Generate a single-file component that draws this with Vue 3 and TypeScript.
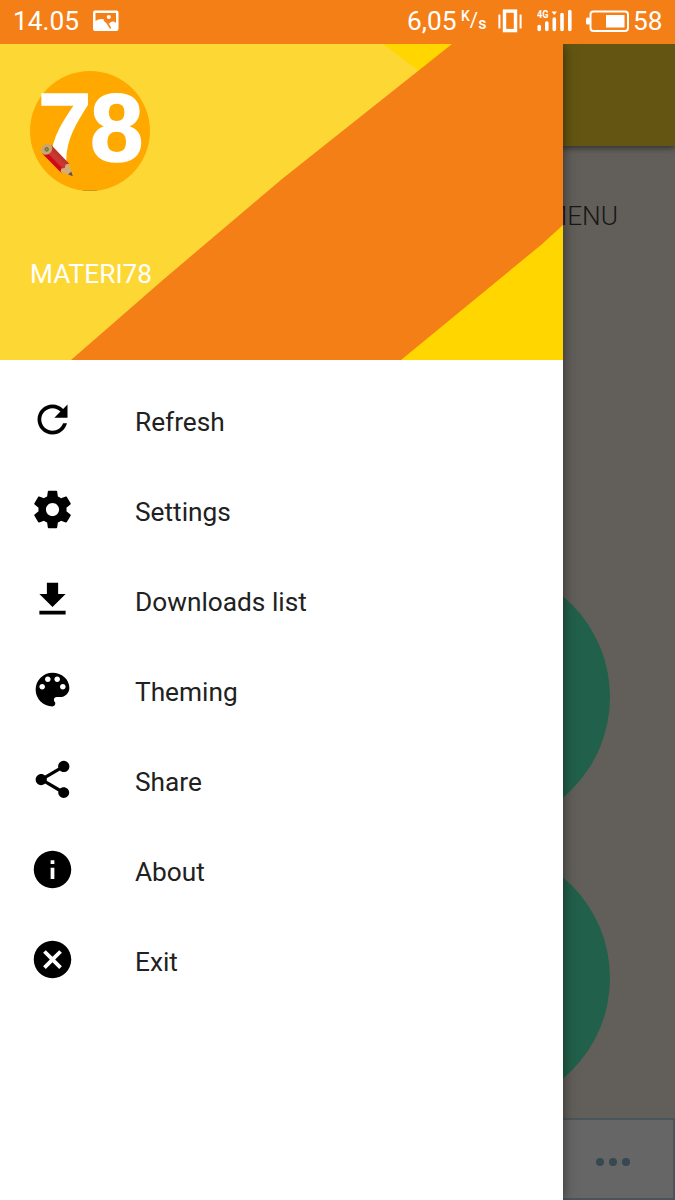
<script setup lang="ts">
interface MenuItem {
  label: string
  icon: string
}

const items: MenuItem[] = [
  {
    label: 'Refresh',
    icon: 'M17.65 6.35C16.2 4.9 14.21 4 12 4c-4.42 0-7.99 3.58-7.99 8s3.57 8 7.99 8c3.73 0 6.84-2.55 7.73-6h-2.08c-.82 2.33-3.04 4-5.65 4-3.31 0-6-2.69-6-6s2.69-6 6-6c1.66 0 3.14.69 4.22 1.78L13 11h7V4l-2.35 2.35z',
  },
  {
    label: 'Settings',
    icon: 'M19.43 12.98c.04-.32.07-.64.07-.98s-.03-.66-.07-.98l2.11-1.65c.19-.15.24-.42.12-.64l-2-3.46c-.12-.22-.39-.3-.61-.22l-2.49 1c-.52-.4-1.08-.73-1.69-.98l-.38-2.65C14.46 2.18 14.25 2 14 2h-4c-.25 0-.46.18-.49.42l-.38 2.65c-.61.25-1.17.59-1.69.98l-2.49-1c-.23-.09-.49 0-.61.22l-2 3.46c-.13.22-.07.49.12.64l2.11 1.65c-.04.32-.07.65-.07.98s.03.66.07.98l-2.11 1.65c-.19.15-.24.42-.12.64l2 3.46c.12.22.39.3.61.22l2.49-1c.52.4 1.08.73 1.69.98l.38 2.65c.03.24.24.42.49.42h4c.25 0 .46-.18.49-.42l.38-2.65c.61-.25 1.17-.59 1.69-.98l2.49 1c.23.09.49 0 .61-.22l2-3.46c.12-.22.07-.49-.12-.64l-2.11-1.65zM12 15.5c-1.93 0-3.5-1.57-3.5-3.5s1.57-3.5 3.5-3.5 3.5 1.57 3.5 3.5-1.57 3.5-3.5 3.5z',
  },
  { label: 'Downloads list', icon: 'M19 9h-4V3H9v6H5l7 7 7-7zM5 18v2h14v-2H5z' },
  {
    label: 'Theming',
    icon: 'M12 3c-4.97 0-9 4.03-9 9s4.03 9 9 9c.83 0 1.5-.67 1.5-1.5 0-.39-.15-.74-.39-1.01-.23-.26-.38-.61-.38-.99 0-.83.67-1.5 1.5-1.5H16c2.76 0 5-2.24 5-5 0-4.42-4.03-8-9-8zm-5.5 9c-.83 0-1.5-.67-1.5-1.5S5.67 9 6.5 9 8 9.67 8 10.5 7.33 12 6.5 12zm3-4C8.67 8 8 7.33 8 6.500S8.67 5 9.500 5s1.500.67 1.500 1.500S10.330 8 9.500 8zm5 0c-.83 0-1.500-.67-1.500-1.500S13.670 5 14.500 5s1.500.67 1.500 1.500S15.330 8 14.500 8zm3 4c-.83 0-1.500-.67-1.500-1.500S16.670 9 17.500 9s1.500.67 1.500 1.500-.67 1.500-1.500 1.500z',
  },
  {
    label: 'Share',
    icon: 'M18 16.08c-.76 0-1.44.3-1.96.77L8.91 12.7c.05-.23.09-.46.09-.7s-.04-.47-.09-.7l7.05-4.11c.54.5 1.25.81 2.04.81 1.66 0 3-1.34 3-3s-1.34-3-3-3-3 1.34-3 3c0 .24.04.47.09.7L8.04 9.81C7.5 9.31 6.79 9 6 9c-1.66 0-3 1.34-3 3s1.34 3 3 3c.79 0 1.5-.31 2.04-.81l7.12 4.16c-.05.21-.08.43-.08.65 0 1.61 1.31 2.92 2.92 2.92s2.92-1.31 2.92-2.92-1.31-2.92-2.92-2.92z',
  },
  {
    label: 'About',
    icon: 'M12 2C6.48 2 2 6.48 2 12s4.48 10 10 10 10-4.48 10-10S17.52 2 12 2zm1 15h-2v-6h2v6zm0-8h-2V7h2v2z',
  },
  {
    label: 'Exit',
    icon: 'M12 2C6.47 2 2 6.47 2 12s4.47 10 10 10 10-4.47 10-10S17.53 2 12 2zm5 13.59L15.59 17 12 13.41 8.41 17 7 15.59 10.59 12 7 8.410 8.410 7 12 10.590 15.590 7 17 8.410 13.410 12 17 15.590z',
  },
]
</script>

<template>
  <div class="screen">
    <header class="status">
      <span class="clock">14.05</span>
      <svg class="picture" width="26" height="22" viewBox="0 0 26 22">
        <rect y=".5" width="25.500" height="20.500" rx="2" fill="#fff" />
        <path d="M2.500 3H23V13C20 10.500 17.500 11.500 16 14C12 8 7 8 2.500 11Z" fill="#f57f17" />
        <path d="M11 10C14 12 16 15 17.500 18.500" stroke="#f57f17" stroke-width="1.600" fill="none" />
        <circle cx="15.800" cy="7" r="2.100" fill="#fff" />
      </svg>
      <span class="speed">6,05</span>
      <span class="unit"><span class="unit-k">K</span><span class="unit-slash">/</span><span class="unit-s">s</span></span>
      <svg class="vibrate" width="24" height="24" viewBox="0 0 24 24" fill="none" stroke="#fff">
        <rect x="6.500" y="2.100" width="11" height="19.500" stroke-width="3.400" />
        <path d="M1.400 5.500V19.500M22.600 5.500V19.500" stroke-width="2" />
      </svg>
      <svg class="signal" width="35" height="24" viewBox="0 0 35 24">
        <text x="0" y="9.300" class="network" textLength="11.500" lengthAdjust="spacingAndGlyphs">4G</text>
        <path d="M14.500 2.500H20L17.200 6Z" fill="#fff" />
        <path d="M2.200 17.500V20.500M9.800 14V20.500M17.300 10V20.500M25 5.500V20.500M32.800 2.500V20.500" stroke="#fff" stroke-width="3.600" stroke-linecap="round" />
      </svg>
      <svg class="battery" width="44" height="23" viewBox="0 0 44 23">
        <rect x="4.500" y="1.500" width="37.500" height="19.500" rx="3" fill="none" stroke="#fff" stroke-width="2" />
        <rect x="0" y="7.500" width="4" height="7" rx="1.500" fill="#fff" />
        <rect x="20" y="5" width="18.500" height="12.500" fill="#fff" />
      </svg>
      <span class="percent">58</span>
    </header>

    <div class="body">
      <main class="page">
        <div class="toolbar"></div>
        <section class="content">
          <h1 class="heading">MENU</h1>
          <div class="disc"></div>
          <div class="disc"></div>
        </section>
        <footer class="footer">
          <i class="dot"></i><i class="dot"></i><i class="dot"></i>
        </footer>
      </main>

      <aside class="drawer">
        <div class="banner">
          <svg class="backdrop" width="563" height="316" viewBox="0 0 563 316">
            <rect width="563" height="316" fill="#fdd835" />
            <path d="M383 0H453L419 27Z" fill="#ffd600" />
            <path d="M452 0H563V316H71L164 235L282 135Z" fill="#f57f17" />
            <path d="M563 181L541 201L401 316H563Z" fill="#ffd600" />
          </svg>
          <svg class="logo" width="120" height="120" viewBox="0 0 120 120">
            <circle cx="60" cy="60" r="60" fill="#ffa900" />
            <path d="M53 119.600H67" stroke="#bd8b28" stroke-width=".8" />
            <text x="8" y="89.500" class="logo-text">78</text>
            <g transform="translate(16.700 78.300) rotate(45.800)">
              <path d="M0-6H26V6H0Z" fill="#c93730" />
              <path d="M0 2H27V6H0Z" fill="#d3061b" />
              <path d="M0-6H26V-3H0Z" fill="#bd342d" />
              <path d="M26-6L37.500 0L26 6L24 3L26 0L24-3Z" fill="#d6ad73" />
              <path d="M33-2.200L37.500 0L33 2.200Z" fill="#62533c" />
              <ellipse rx="5" ry="6" fill="#c8a767" />
              <circle r="2.200" fill="#77694d" />
              <circle r=".9" fill="#a39370" />
            </g>
          </svg>
          <div class="account">MATERI78</div>
        </div>
        <nav class="menu">
          <a v-for="item in items" :key="item.label" class="row">
            <svg class="icon" width="45" height="45" viewBox="0 0 24 24"><path :d="item.icon" /></svg>
            <span>{{ item.label }}</span>
          </a>
        </nav>
      </aside>
    </div>
  </div>
</template>

<style>
body {
  margin: 0;
}
</style>

<style scoped>
.screen {
  width: 675px;
  height: 1200px;
  overflow: hidden;
  display: flex;
  flex-direction: column;
  font-family: Roboto, sans-serif;
}
.status {
  height: 44px;
  flex: none;
  box-sizing: border-box;
  padding: 0 0 2px 13px;
  display: flex;
  align-items: center;
  background: #f57f17;
  color: #fff;
  font-size: 26.25px;
  line-height: 42px;
  white-space: nowrap;
}
.status > * {
  flex: none;
}
.clock {
  width: 80px;
}
.speed {
  margin-left: 288px;
  width: 54px;
}
.unit {
  display: flex;
  width: 37px;
  line-height: 18px;
}
.unit-k {
  margin-top: -3px;
  font-weight: 500;
  font-size: 14px;
}
.unit-slash {
  margin-top: 1px;
  font-size: 20px;
}
.unit-s {
  margin-top: 5px;
  font-size: 16px;
  font-weight: 500;
}
.signal {
  margin-left: 15px;
}
.network {
  font: 700 10.5px Roboto, sans-serif;
  fill: #fff;
}
.battery {
  margin-left: 14px;
}
.percent {
  margin-left: 3px;
}
.body {
  flex: 1;
  position: relative;
  overflow: hidden;
}
.page {
  height: 100%;
  display: flex;
  flex-direction: column;
  background: #625f5a;
}
.toolbar {
  height: 102px;
  flex: none;
  background: #645612;
  box-shadow: 0 2px 6px rgba(0, 0, 0, 0.5);
}
.content {
  flex: 1;
  display: flex;
  flex-direction: column;
}
.heading {
  margin: 52px 57px 0 0;
  height: 36px;
  line-height: 36px;
  text-align: right;
  font-size: 26.25px;
  font-weight: 300;
  color: #171716;
}
.disc {
  width: 262px;
  height: 262px;
  flex: none;
  margin: 332px 0 0 347.5px;
  border-radius: 50%;
  background: #21604a;
}
.disc + .disc {
  margin-top: 19px;
}
.footer {
  height: 82px;
  flex: none;
  box-sizing: border-box;
  border: 2px solid #4a555b;
  background: #666;
  display: flex;
  justify-content: flex-end;
  align-items: center;
  gap: 5px;
  padding: 6px 43px 0 0;
}
.dot {
  width: 8px;
  height: 8px;
  border-radius: 50%;
  background: #374850;
}
.drawer {
  position: absolute;
  top: 0;
  left: 0;
  width: 562.5px;
  height: 100%;
  background: #fff;
  box-shadow: 0 0 12px rgba(0, 0, 0, 0.5);
}
.banner {
  position: relative;
  height: 316px;
  box-sizing: border-box;
  padding: 27px 30px 0;
  overflow: hidden;
}
.backdrop {
  position: absolute;
  top: 0;
  left: 0;
}
.logo {
  position: relative;
  display: block;
}
.logo-text {
  font: 700 96px "Liberation Sans", sans-serif;
  letter-spacing: -1.5px;
  fill: #fff;
  stroke: #fff;
  stroke-width: 1.5px;
}
.account {
  position: relative;
  margin-top: 65px;
  line-height: 36px;
  font-size: 26.25px;
  color: #fff;
}
.menu {
  padding-top: 14px;
}
.row {
  height: 90px;
  padding-left: 30px;
  display: flex;
  align-items: center;
  gap: 60px;
  font-size: 26.25px;
  line-height: 36px;
  color: #212121;
}
.row span {
  padding-top: 5px;
}
.icon {
  flex: none;
  fill: #000;
}
</style>
